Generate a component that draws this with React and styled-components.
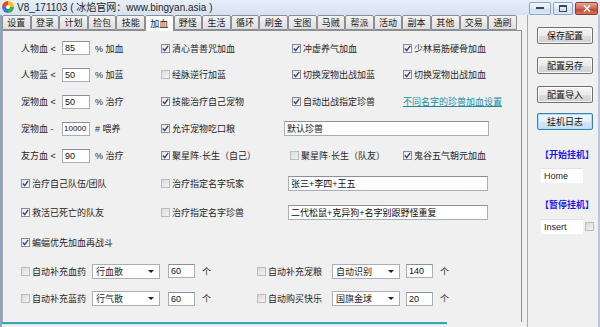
import React from 'react'
import styled, { createGlobalStyle } from 'styled-components'

const GlobalStyle = createGlobalStyle`
  html, body { margin: 0; padding: 0; background: #f0f0f0; }
  body {
    font-family: "Liberation Sans", "Noto Sans CJK SC", sans-serif;
    font-size: 9px;
    color: #262626;
  }
  * { box-sizing: border-box; }
`

const TABS = ['设置', '登录', '计划', '捡包', '技能', '加血', '野怪', '生活', '循环', '刷金', '宝图', '马贼', '帮派', '活动', '副本', '其他', '交易', '通刷']

const Window = styled.div`
  width: 600px;
  height: 327px;
  display: flex;
  flex-direction: column;
  background: #f0f0f0;
  overflow: hidden;
`

const TitleBar = styled.div`
  flex: 0 0 15px;
  display: flex;
  align-items: flex-start;
  padding-left: 2px;
  background: linear-gradient(#e7eff9, #d4e2f2);
`

const Title = styled.span`
  margin: 1px 0 0 3px;
  font-size: 10px;
  line-height: 13px;
  color: #1e1e1e;
`

const Controls = styled.div`
  margin: 2px 2px 0 auto;
  display: flex;
  gap: 2px;
`

const Ctrl = styled.div`
  width: ${p => p.$w}px;
  height: 13px;
  border: 1px solid ${p => (p.$close ? '#8f3b30' : '#8ea6c4')};
  border-radius: 2px;
  display: flex;
  align-items: center;
  justify-content: center;
  background: ${p =>
    p.$close
      ? 'linear-gradient(#e9a899, #d0644f 50%, #c2412d 51%, #d4735c)'
      : 'linear-gradient(#f1f6fc, #dfe9f5 50%, #cddcee 51%, #dce8f5)'};
`

const Body = styled.div`
  flex: 1;
  display: flex;
  border-left: 2px solid #8ea5c2;
  border-right: 2px solid #b7c8dc;
  min-height: 0;
`

const LeftCol = styled.div`
  width: 520px;
  display: flex;
  flex-direction: column;
`

const TabBar = styled.div`
  flex: 0 0 16px;
  display: flex;
  align-items: flex-end;
  border-bottom: 1px solid #8c8e94;
`

const Tab = styled.div`
  width: 28.6px;
  height: ${p => (p.$active ? 16 : 15)}px;
  margin-bottom: ${p => (p.$active ? -1 : 0)}px;
  position: relative;
  border: 1px solid #8c8e94;
  border-bottom: ${p => (p.$active ? 'none' : '1px solid #8c8e94')};
  border-radius: 2px 2px 0 0;
  background: ${p => (p.$active ? '#fcfcfc' : 'linear-gradient(#f4f4f4, #dedede)')};
  display: flex;
  align-items: center;
  justify-content: center;
  font-size: 9px;
  color: #222;
`

const Panel = styled.div`
  flex: 1;
  border-left: 1px solid #a7a9ad;
  border-right: 1px solid #8c8e94;
  padding: 4px 0 0 18px;
  background: #f0f0f0;
`

const Progress = styled.div`
  flex: 0 0 5px;
  border-top: 2px solid #3ba5b6;
  width: ${p => p.$width}px;
  background: linear-gradient(#c8e8ee 1px, transparent 1px);
`

const Row = styled.div`
  height: ${p => p.$h}px;
  display: grid;
  grid-template-columns: 140px 131px 111px 1fr;
  align-items: center;
`

const FlexRow = styled.div`
  height: ${p => p.$h}px;
  display: flex;
  align-items: center;
`

const ValueCell = styled.div`
  display: flex;
  align-items: center;
`

const Label = styled.span`
  width: 41px;
  white-space: nowrap;
`

const Field = styled.input`
  width: ${p => p.$w}px;
  height: ${p => p.$h || 14}px;
  margin-left: ${p => p.$ml || 0}px;
  padding: 0 ${p => p.$pad ?? 2}px;
  font-family: inherit;
  font-size: ${p => p.$fs || 9}px;
  line-height: 12px;
  color: #111;
  background: #fff;
  border: 1px solid #a9afb8;
  border-top-color: #8b9098;
  outline: none;
`

const Unit = styled.span`
  margin-left: ${p => p.$ml || 5}px;
  white-space: nowrap;
`

const CheckWrap = styled.label`
  display: flex;
  align-items: center;
  gap: 2px;
  white-space: nowrap;
  width: ${p => (p.$w ? `${p.$w}px` : 'auto')};
  flex: 0 0 auto;
  margin-left: ${p => p.$ml || 0}px;
`

const Box = styled.span`
  width: 9px;
  height: 9px;
  flex: 0 0 9px;
  display: inline-flex;
  align-items: center;
  justify-content: center;
  border: 1px solid ${p => (p.$on ? '#8a8c90' : '#b9bbbe')};
  background: ${p => (p.$on ? 'linear-gradient(135deg, #e6e6e6, #ffffff)' : 'linear-gradient(135deg, #dcdcdc, #f3f3f3)')};
`

const Link = styled.span`
  color: #1b8ea3;
  text-decoration: underline;
  white-space: nowrap;
`

const Select = styled.div`
  width: 68px;
  height: 15px;
  display: flex;
  align-items: center;
  justify-content: space-between;
  padding: 0 5px 0 3px;
  background: #fff;
  border: 1px solid #a9afb8;
  font-size: 9px;
`

const Arrow = styled.span`
  width: 0;
  height: 0;
  border-left: 3px solid transparent;
  border-right: 3px solid transparent;
  border-top: 3px solid #222;
`

const SupplyGroup = styled.div`
  width: ${p => p.$w}px;
  display: flex;
  align-items: center;
`

const Sidebar = styled.div`
  flex: 1;
  margin-left: 5px;
  border-left: 1px solid #a7a9ad;
  display: flex;
  flex-direction: column;
  align-items: flex-start;
`

const Button = styled.div`
  width: 56px;
  height: 17px;
  margin: ${p => p.$top}px 0 0 9px;
  display: flex;
  align-items: center;
  justify-content: center;
  font-size: 9px;
  color: #111;
  border: 1px solid ${p => (p.$focused ? '#3c7fb1' : '#707070')};
  border-radius: 2px;
  background: ${p =>
    p.$focused
      ? 'linear-gradient(#f2f8fc, #e3f0f9 50%, #d0e6f5 51%, #c6e0f2)'
      : 'linear-gradient(#f3f3f3, #ebebeb 50%, #dddddd 51%, #d1d1d1)'};
  box-shadow: inset 0 0 0 1px ${p => (p.$focused ? '#a8e2f6' : 'rgba(255,255,255,0.75)')};
`

const HotkeyTitle = styled.div`
  margin: ${p => p.$top}px 0 0 12px;
  color: #1717f5;
  font-weight: bold;
  line-height: 12px;
  white-space: nowrap;
`

const HotkeyRow = styled.div`
  margin: ${p => p.$top}px 0 0 13px;
  display: flex;
  align-items: center;
  gap: 2px;
`

const HotkeyField = styled.div`
  width: 42px;
  height: 15px;
  padding-left: 3px;
  display: flex;
  align-items: center;
  background: #fff;
  border-top: 1px solid #e2e2e2;
  font-size: 9px;
`

const AppIcon = () => (
  <svg width="12" height="12" viewBox="0 0 12 12" style={{ marginTop: 1 }}>
    <path d="M6 6 L6 0 A6 6 0 0 0 0 6 Z" fill="#e8452c" />
    <path d="M6 6 L12 6 A6 6 0 0 0 6 0 Z" fill="#f7c21c" />
    <path d="M6 6 L6 12 A6 6 0 0 0 12 6 Z" fill="#3fae49" />
    <path d="M6 6 L0 6 A6 6 0 0 0 6 12 Z" fill="#2f7fd8" />
    <circle cx="6" cy="6" r="2" fill="#fff" />
  </svg>
)

const Check = ({ on, children, w, ml }) => (
  <CheckWrap $w={w} $ml={ml}>
    <Box $on={on}>
      {on && (
        <svg width="7" height="7" viewBox="0 0 7 7">
          <path d="M0.8 3.6 L2.7 5.6 L6.2 0.9" fill="none" stroke="#25468f" strokeWidth="1.4" />
        </svg>
      )}
    </Box>
    <span>{children}</span>
  </CheckWrap>
)

const Value = ({ label, value, unit }) => (
  <ValueCell>
    <Label>{label}</Label>
    <Field
      $w={28}
      $pad={value.length > 3 ? 1 : 2}
      $fs={value.length > 3 ? 8 : 9}
      defaultValue={value}
      readOnly
    />
    <Unit>{unit}</Unit>
  </ValueCell>
)

const Supply = ({ label, item, count, w, checkW, gap }) => (
  <SupplyGroup $w={w}>
    <Check w={checkW}>{label}</Check>
    <Select>
      <span>{item}</span>
      <Arrow />
    </Select>
    <Field $w={27} $ml={gap} defaultValue={count} readOnly />
    <Unit $ml={7}>个</Unit>
  </SupplyGroup>
)

const App = () => (
  <Window>
    <GlobalStyle />
    <TitleBar>
      <AppIcon />
      <Title>V8_171103 ( 冰焰官网：www.bingyan.asia )</Title>
      <Controls>
        <Ctrl $w={22}>
          <svg width="8" height="3"><rect x="0" y="0" width="8" height="2" fill="#37485e" /></svg>
        </Ctrl>
        <Ctrl $w={20}>
          <svg width="8" height="7"><rect x="0.5" y="0.5" width="7" height="6" fill="none" stroke="#37485e" /><rect x="0" y="0" width="8" height="2" fill="#37485e" /></svg>
        </Ctrl>
        <Ctrl $w={23} $close>
          <svg width="8" height="7"><path d="M1 0.5 L7 6.5 M7 0.5 L1 6.5" stroke="#fff" strokeWidth="1.6" /></svg>
        </Ctrl>
      </Controls>
    </TitleBar>
    <Body>
      <LeftCol>
        <TabBar>
          {TABS.map(t => (
            <Tab key={t} $active={t === '加血'}>{t}</Tab>
          ))}
        </TabBar>
        <Panel>
          <Row $h={26}>
            <Value label="人物血 <" value="85" unit="% 加血" />
            <Check on>清心普善咒加血</Check>
            <Check on>冲虚养气加血</Check>
            <Check on>少林易筋硬骨加血</Check>
          </Row>
          <Row $h={27}>
            <Value label="人物蓝 <" value="50" unit="% 加蓝" />
            <Check>经脉逆行加蓝</Check>
            <Check on>切换宠物出战加蓝</Check>
            <Check on>切换宠物出战加血</Check>
          </Row>
          <Row $h={27}>
            <Value label="宠物血 <" value="50" unit="% 治疗" />
            <Check on>技能治疗自己宠物</Check>
            <Check on>自动出战指定珍兽</Check>
            <Link>不同名字的珍兽加血设置</Link>
          </Row>
          <Row $h={27}>
            <Value label="宠物血 -" value="10000" unit="# 喂养" />
            <Check on>允许宠物吃口粮</Check>
            <Field $w={205} $h={15} $ml={-8} defaultValue="默认珍兽" readOnly style={{ gridColumn: '3 / 5' }} />
          </Row>
          <Row $h={27}>
            <Value label="友方血 <" value="90" unit="% 治疗" />
            <Check on>聚星阵·长生（自己）</Check>
            <Check ml={-2}>聚星阵·长生（队友）</Check>
            <Check on>鬼谷五气朝元加血</Check>
          </Row>
          <Row $h={28}>
            <Check on>治疗自己队伍/团队</Check>
            <Check>治疗指定名字玩家</Check>
            <Field $w={200} $h={15} $ml={-4} defaultValue="张三+李四+王五" readOnly style={{ gridColumn: '3 / 5' }} />
          </Row>
          <Row $h={30}>
            <Check on>救活已死亡的队友</Check>
            <Check>治疗指定名字珍兽</Check>
            <Field $w={200} $h={15} $ml={-4} defaultValue="二代松鼠+克异狗+名字别跟野怪重复" readOnly style={{ gridColumn: '3 / 5' }} />
          </Row>
          <Row $h={30}>
            <Check on>蝙蝠优先加血再战斗</Check>
          </Row>
          <FlexRow $h={28}>
            <Supply label="自动补充血药" item="行血散" count="60" w={236} checkW={71} gap={8} />
            <Supply label="自动补充宠粮" item="自动识别" count="140" w={200} checkW={75} gap={6} />
          </FlexRow>
          <FlexRow $h={27}>
            <Supply label="自动补充蓝药" item="行气散" count="60" w={236} checkW={71} gap={8} />
            <Supply label="自动购买快乐" item="国旗金球" count="20" w={200} checkW={75} gap={6} />
          </FlexRow>
        </Panel>
        <Progress $width={445} />
      </LeftCol>
      <Sidebar>
        <Button $top={12}>保存配置</Button>
        <Button $top={13}>配置另存</Button>
        <Button $top={12}>配置导入</Button>
        <Button $top={10} $focused>挂机日志</Button>
        <HotkeyTitle $top={19}>【开始挂机】</HotkeyTitle>
        <HotkeyRow $top={7}>
          <HotkeyField>Home</HotkeyField>
        </HotkeyRow>
        <HotkeyTitle $top={16}>【暂停挂机】</HotkeyTitle>
        <HotkeyRow $top={8}>
          <HotkeyField>Insert</HotkeyField>
          <Box />
        </HotkeyRow>
      </Sidebar>
    </Body>
  </Window>
)

export default App
